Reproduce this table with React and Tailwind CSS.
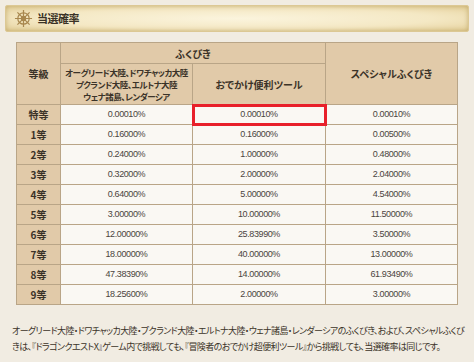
const rows = [
  ['特等', '0.00010%', '0.00010%', '0.00010%'],
  ['1等', '0.16000%', '0.16000%', '0.00500%'],
  ['2等', '0.24000%', '1.00000%', '0.48000%'],
  ['3等', '0.32000%', '2.00000%', '2.04000%'],
  ['4等', '0.64000%', '5.00000%', '4.54000%'],
  ['5等', '3.00000%', '10.00000%', '11.50000%'],
  ['6等', '12.00000%', '25.83990%', '3.50000%'],
  ['7等', '18.00000%', '40.00000%', '13.00000%'],
  ['8等', '47.38390%', '14.00000%', '61.93490%'],
  ['9等', '18.25600%', '2.00000%', '3.00000%'],
];

const jp = { fontFamily: '"Noto Sans CJK JP", sans-serif', fontFeatureSettings: '"palt"' };
const num = { fontFamily: '"Liberation Sans", sans-serif' };

const Wheel = () => (
  <svg width="19" height="19" viewBox="0 0 20 20" className="shrink-0">
    <g stroke="#a8874e" fill="none" strokeWidth="1.3">
      <circle cx="10" cy="10" r="6" />
      <circle cx="10" cy="10" r="2.2" />
      <path d="M10 1v18M1 10h18M3.6 3.6l12.8 12.8M16.4 3.6L3.6 16.4" />
    </g>
    <circle cx="10" cy="10" r="1" fill="#a8874e" />
  </svg>
);

export default function App() {
  return (
    <div className="w-[474px] h-[362px] bg-[#f1ece2] pt-[5px] overflow-hidden" style={jp}>
      {/* title banner */}
      <div className="mx-[5px] h-[27px] flex items-center gap-[4px] pl-[8px] rounded-[2px] border border-[#dcc894] bg-[radial-gradient(ellipse_at_center,#fbf4dd_0%,#f4e8c4_60%,#e4d09a_100%)] shadow-[inset_0_0_5px_rgba(170,140,70,0.55)]">
        <Wheel />
        <span className="text-[11px] font-bold text-[#3a3226] tracking-[-0.5px]">当選確率</span>
      </div>

      <table className="ml-[16px] mt-[10px] border-collapse text-[#3b3328] table-fixed w-[441px]">
        <colgroup>
          <col className="w-[44px]" />
          <col className="w-[132px]" />
          <col className="w-[133px]" />
          <col className="w-[132px]" />
        </colgroup>
        <thead>
          <tr className="h-[21px] bg-[#e1caa9]">
            <th rowSpan={2} className="border border-[#b9a587] text-[10px] font-bold">等級</th>
            <th colSpan={2} className="border border-[#b9a587] text-[10px] font-bold">ふくびき</th>
            <th rowSpan={2} className="border border-[#b9a587] text-[10px] font-bold">スペシャルふくびき</th>
          </tr>
          <tr className="h-[41px] bg-[#e1caa9]">
            <th className="border border-[#b9a587] text-[8.5px] leading-[12px] font-bold tracking-[-0.5px] whitespace-nowrap">
              オーグリード大陸、ドワチャッカ大陸<br />プクランド大陸、エルトナ大陸<br />ウェナ諸島、レンダーシア
            </th>
            <th className="border border-[#b9a587] text-[10px] font-bold">おでかけ便利ツール</th>
          </tr>
        </thead>
        <tbody>
          {rows.map((r, i) => (
            <tr key={r[0]} className="h-[20px]">
              <th className="border border-[#b9a587] bg-[#e1caa9] text-[10px] font-bold">{r[0]}</th>
              <td className="border border-[#b9a587] bg-[#faf8f3] text-center text-[9px] tracking-[-0.4px] text-[#4a4440]" style={num}>{r[1]}</td>
              <td className={`border bg-[#faf8f3] text-center text-[9px] tracking-[-0.4px] text-[#4a4440] ${i === 0 ? 'outline-[3px] outline outline-[#e8202a] -outline-offset-[2px] border-[#b9a587]' : 'border-[#b9a587]'}`} style={num}>{r[2]}</td>
              <td className="border border-[#b9a587] bg-[#faf8f3] text-center text-[9px] tracking-[-0.4px] text-[#4a4440]" style={num}>{r[3]}</td>
            </tr>
          ))}
        </tbody>
      </table>

      <p className="ml-[12px] mt-[18px] text-[9px] leading-[16px] text-[#3b3328] whitespace-nowrap tracking-[-0.6px]">
        オーグリード大陸・ドワチャッカ大陸・プクランド大陸・エルトナ大陸・ウェナ諸島・レンダーシアのふくびき、および、スペシャルふくび<br />
        きは、『ドラゴンクエストX』ゲーム内で挑戦しても、『冒険者のおでかけ超便利ツール』から挑戦しても、当選確率は同じです。
      </p>
    </div>
  );
}
